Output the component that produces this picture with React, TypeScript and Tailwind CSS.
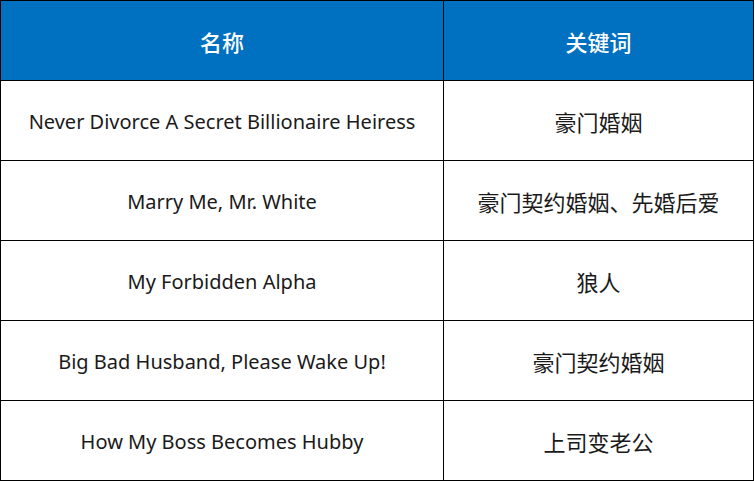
const rows: [string, string][] = [
  ["Never Divorce A Secret Billionaire Heiress", "豪门婚姻"],
  ["Marry Me, Mr. White", "豪门契约婚姻、先婚后爱"],
  ["My Forbidden Alpha", "狼人"],
  ["Big Bad Husband, Please Wake Up!", "豪门契约婚姻"],
  ["How My Boss Becomes Hubby", "上司变老公"],
];

export default function App() {
  return (
    <div
      className="bg-white w-[754px] border-l border-t border-black"
      style={{ fontFamily: '"Noto Sans", "Noto Sans CJK SC", sans-serif' }}
    >
      <div className="grid grid-cols-[443px_310px]">
        <div className="h-[80px] bg-[#0070c0] border-r border-b border-black flex items-center justify-center pt-[4px] text-white text-[22px] font-medium">
          名称
        </div>
        <div className="h-[80px] bg-[#0070c0] border-r border-b border-black flex items-center justify-center pt-[4px] text-white text-[22px] font-medium">
          关键词
        </div>
        {rows.map(([name, kw]) => (
          <>
            <div
              key={name}
              className="h-[80px] border-r border-b border-black flex items-center justify-center pt-[3px] text-[#1a1a1a] text-[20px]"
            >
              {name}
            </div>
            <div
              key={kw + name}
              className="h-[80px] border-r border-b border-black flex items-center justify-center pt-[4px] text-[#1a1a1a] text-[22px]"
            >
              {kw}
            </div>
          </>
        ))}
      </div>
    </div>
  );
}
